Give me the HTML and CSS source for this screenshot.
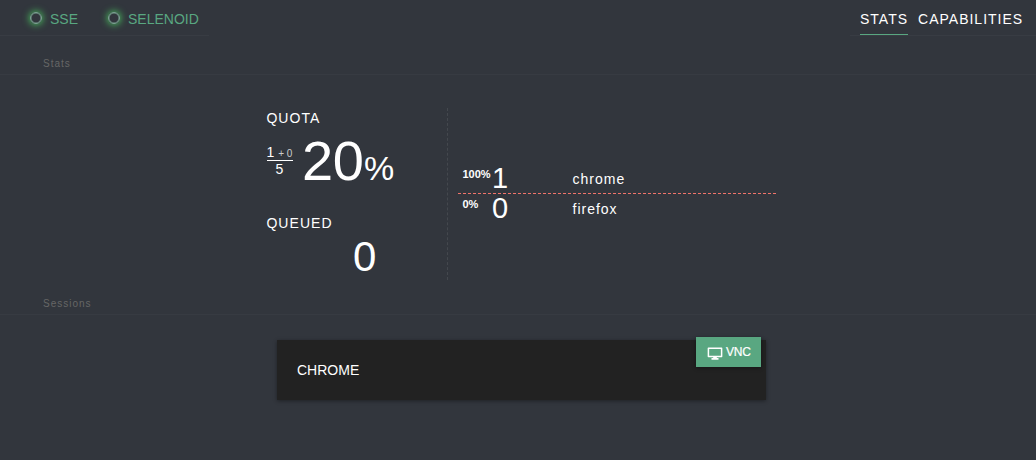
FILE: index.html
```html
<!DOCTYPE html>
<html lang="en">
<head>
<meta charset="utf-8">
<title>Selenoid UI</title>
<link rel="stylesheet" href="styles.css">
</head>
<body>
<header class="topbar">
  <div class="statuses">
    <div class="status"><span class="dot"></span>SSE</div>
    <div class="status selenoid"><span class="dot"></span>SELENOID</div>
  </div>
  <nav class="nav">
    <a class="tab active">STATS</a>
    <a class="tab">CAPABILITIES</a>
  </nav>
</header>
<div class="section-title">Stats</div>
<main class="stats">
  <section class="quota">
    <div class="label">QUOTA</div>
    <div class="usage">
      <div class="fraction">
        <div class="used">1 <span class="pending">+ 0</span></div>
        <div class="total">5</div>
      </div>
      <div class="percent">20<span class="sign">%</span></div>
    </div>
    <div class="label queued-label">QUEUED</div>
    <div class="queued">0</div>
  </section>
  <section class="browsers">
    <div class="browser"><span class="share">100%</span><span class="count">1</span><span class="name">chrome</span></div>
    <div class="browser"><span class="share">0%</span><span class="count">0</span><span class="name">firefox</span></div>
  </section>
</main>
<div class="section-title sessions-title">Sessions</div>
<section class="session">
  <span class="session-name">CHROME</span>
  <a class="vnc">
    <svg class="monitor" viewBox="0 0 16 13"><path d="M1.4 1.2h13.2v8.3H1.4z" fill="none" stroke="#fff" stroke-width="1.5" stroke-linejoin="round"/><path d="M6.2 9.5h3.6v1.5h1.7v1.7h-7V11h1.7z" fill="#fff"/></svg>
    <span>VNC</span>
  </a>
</section>
</body>
</html>
```
FILE: styles.css
```css
* { box-sizing: border-box; }
body {
  margin: 0;
  height: 460px;
  overflow: hidden;
  background: #32363d;
  color: #fff;
  font-family: "Liberation Sans", Arial, sans-serif;
}
.topbar { display: flex; justify-content: space-between; height: 36px; }
.statuses {
  display: flex;
  width: 209px;
  padding-left: 30px;
  border-bottom: 1px solid #383c43;
  color: #59a781;
  font-size: 14px;
  line-height: 38px;
}
.status { display: flex; white-space: nowrap; }
.selenoid { margin-left: 30px; }
.dot {
  width: 12px;
  height: 12px;
  margin: 12px 8px 0 0;
  border: 1px solid #7fa896;
  border-radius: 50%;
  box-shadow: 0 0 7px 1px #47b85c, inset 0 0 0 .5px #6c9583;
}
.nav {
  display: flex;
  gap: 10px;
  width: 186px;
  padding-left: 10px;
  border-bottom: 1px solid #383c43;
  font-size: 14px;
  line-height: 38px;
  letter-spacing: 1px;
}
.tab { height: 35px; white-space: nowrap; }
.active { border-bottom: 1px solid #59a781; }
.section-title {
  height: 39px;
  padding: 21px 0 0 43px;
  border-bottom: 1px solid #373b42;
  color: #666;
  font-size: 10px;
  line-height: 14px;
  letter-spacing: 1px;
}
.stats { display: flex; height: 205px; padding: 33px 0 0 266px; }
.quota { width: 182px; height: 172px; border-right: 1px dashed #44484e; }
.label { height: 20px; padding-left: .4px; font-size: 14px; line-height: 20px; letter-spacing: 1.05px; }
.usage { display: flex; height: 64px; }
.fraction { width: 26px; margin: 17px 9px 0 1px; text-align: center; font-size: 14px; line-height: 15px; }
.used { height: 16px; border-bottom: 1px solid #fff; white-space: nowrap; text-align: left; text-indent: -.5px; }
.pending { color: #ccc; font-size: 10px; }
.total { line-height: 16px; text-indent: -1px; }
.percent { font-size: 56px; line-height: 66px; letter-spacing: -.4px; white-space: nowrap; }
.sign { margin-left: .6px; font-size: 34px; }
.queued-label { margin-top: 21px; }
.queued { padding-left: 87px; font-size: 42px; line-height: 48px; }
.browsers { width: 318px; margin: 55px 0 0 10px; }
.browser { display: flex; height: 30px; padding-left: 4px; }
.browser:first-child { height: 31px; border-bottom: 1px dashed #f0746a; }
.browser + .browser { margin-top: -1px; }
.share { width: 30px; padding-left: .5px; font-size: 11px; font-weight: bold; line-height: 22px; }
.count { width: 80px; font-size: 29px; line-height: 31px; }
.name { padding-left: .5px; font-size: 14px; line-height: 32px; letter-spacing: 1px; }
.sessions-title { height: 35px; padding-top: 17px; }
.session {
  display: flex;
  justify-content: space-between;
  width: 489px;
  height: 60px;
  margin: 25px 0 0 277px;
  padding: 0 5px 0 20px;
  background: #222;
  box-shadow: 0 1px 4px rgba(0, 0, 0, .4);
  font-size: 14px;
  line-height: 60px;
}
.vnc {
  display: flex;
  width: 65px;
  height: 30px;
  margin-top: -3px;
  padding-left: 11px;
  background: #59a781;
  box-shadow: 0 1px 4px rgba(0, 0, 0, .4);
  font-size: 12px;
  line-height: 30px;
  letter-spacing: -.15px;
  -webkit-text-stroke: .2px #fff;
}
.monitor { width: 16px; height: 13px; margin: 10px 3px 0 0; }
```
